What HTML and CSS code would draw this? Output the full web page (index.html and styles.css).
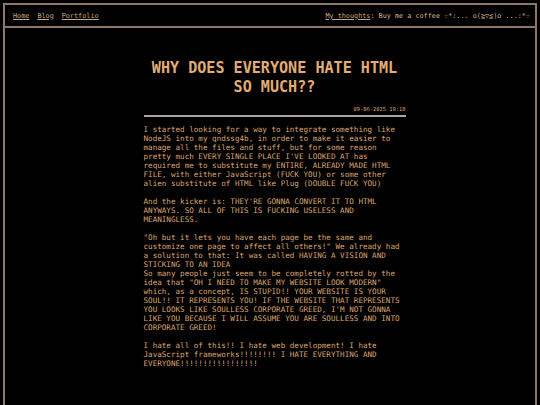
FILE: index.html
```html
<!DOCTYPE html>
<html>
<head>
<meta charset="utf-8">
<link rel="stylesheet" href="styles.css">
</head>
<body>
<div class="frame">
  <nav class="nav">
    <div class="nav-left">
      <a href="#">Home</a>
      <a href="#">Blog</a>
      <a href="#">Portfolio</a>
    </div>
    <div class="nav-right"><a href="#">My thoughts</a>: Buy me a coffee ☆*:... o(≧▽≦)o ...:*☆</div>
  </nav>
  <main class="main">
    <article class="post">
      <h1 class="title">WHY DOES EVERYONE HATE HTML SO MUCH??</h1>
      <div class="date">09-06-2025 19:18</div>
      <hr class="rule">
      <p>I started looking for a way to integrate something like NodeJS into my qndssg4b, in order to make it easier to manage all the files and stuff, but for some reason pretty much EVERY SINGLE PLACE I'VE LOOKED AT has required me to substitute my ENTIRE, ALREADY MADE HTML FILE, with either JavaScript (FUCK YOU) or some other alien substitute of HTML like Plug (DOUBLE FUCK YOU)</p>
      <p>And the kicker is: THEY'RE GONNA CONVERT IT TO HTML ANYWAYS. SO ALL OF THIS IS FUCKING USELESS AND MEANINGLESS.</p>
      <p>"Oh but it lets you have each page be the same and customize one page to affect all others!" We already had a solution to that: It was called HAVING A VISION AND STICKING TO AN IDEA<br>So many people just seem to be completely rotted by the idea that "OH I NEED TO MAKE MY WEBSITE LOOK MODERN" which, as a concept, IS STUPID!! YOUR WEBSITE IS YOUR SOUL!! IT REPRESENTS YOU! IF THE WEBSITE THAT REPRESENTS YOU LOOKS LIKE SOULLESS CORPORATE GREED, I'M NOT GONNA LIKE YOU BECAUSE I WILL ASSUME YOU ARE SOULLESS AND INTO CORPORATE GREED!</p>
      <p>I hate all of this!! I hate web development! I hate JavaScript frameworks!!!!!!!! I HATE EVERYTHING AND EVERYONE!!!!!!!!!!!!!!!!!</p>
    </article>
  </main>
</div>
</body>
</html>
```
FILE: styles.css
```css
html, body {
  margin: 0;
  padding: 0;
  background: #000;
  height: 100%;
}
body {
  padding: 3px 3px 0 3px;
  box-sizing: border-box;
  font-family: "DejaVu Sans Mono", monospace;
  color: #dca66c;
  overflow: hidden;
}
.frame {
  border: 2px solid #8c7864;
  border-bottom: none;
  min-height: 100%;
  box-sizing: border-box;
}
.nav {
  display: flex;
  justify-content: space-between;
  align-items: center;
  height: 21px;
  padding: 0 5px 0 8px;
  border-bottom: 2px solid #8c7864;
  font-size: 6.8px;
  color: #d8b48c;
}
.nav-left {
  display: flex;
  gap: 8px;
}
.nav a {
  color: #c8a880;
  text-decoration: underline;
}
.nav-right a {
  color: #c8a880;
}
.main {
  padding-left: 9px;
}
.post {
  width: 262px;
  margin: 0 auto;
  font-size: 7.6px;
  line-height: 9px;
}
.title {
  margin: 31px 0 0 0;
  text-align: center;
  font-size: 15.1px;
  line-height: 19px;
  font-weight: bold;
  color: #e2ac76;
}
.date {
  text-align: right;
  font-size: 5.4px;
  line-height: 6px;
  margin-top: 9px;
  color: #d8a870;
}
.rule {
  border: none;
  border-top: 2px solid #a8a4a0;
  margin: 3px 0 8px 0;
}
.post p {
  margin: 0 0 9px 0;
}
```
